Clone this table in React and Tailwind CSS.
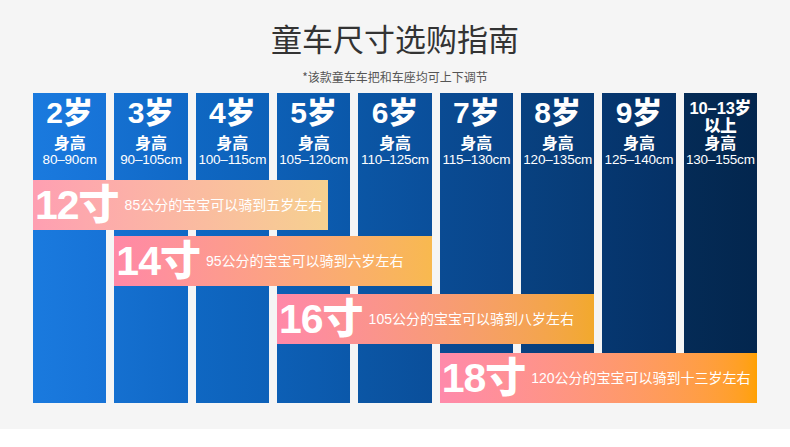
import React from "react";

const columns = [
  { age: "2", range: "80–90cm", cls: "col-start-1 from-[#1a7ade] to-[#1773d7]" },
  { age: "3", range: "90–105cm", cls: "col-start-2 from-[#1570d0] to-[#1068c6]" },
  { age: "4", range: "100–115cm", cls: "col-start-3 from-[#0f67c2] to-[#0d61b9]" },
  { age: "5", range: "105–120cm", cls: "col-start-4 from-[#0d5fb5] to-[#0b58aa]" },
  { age: "6", range: "110–125cm", cls: "col-start-5 from-[#0b56a5] to-[#0a4f9b]" },
  { age: "7", range: "115–130cm", cls: "col-start-6 from-[#0a4b93] to-[#09458a]" },
  { age: "8", range: "120–135cm", cls: "col-start-7 from-[#084180] to-[#073b76]" },
  { age: "9", range: "125–140cm", cls: "col-start-8 from-[#063770] to-[#053166]" },
];

const banners = [
  {
    size: "12",
    text: "85公分的宝宝可以骑到五岁左右",
    cls: "row-start-2 col-start-1 col-end-5 mr-[22px] from-[#fe9fb2] to-[#f6d08f]",
  },
  {
    size: "14",
    text: "95公分的宝宝可以骑到六岁左右",
    cls: "row-start-4 col-start-2 col-end-6 from-[#ff88a6] to-[#f8b94f]",
  },
  {
    size: "16",
    text: "105公分的宝宝可以骑到八岁左右",
    cls: "row-start-6 col-start-4 col-end-8 from-[#ff88a8] to-[#f2a92c]",
  },
  {
    size: "18",
    text: "120公分的宝宝可以骑到十三岁左右",
    cls: "row-start-8 col-start-6 col-end-10 from-[#ff8aab] to-[#ffa100]",
  },
];

function Column({ age, range, cls }) {
  return (
    <div className={"row-start-1 row-end-9 flex flex-col items-center pt-[4px] text-white bg-linear-to-r " + cls}>
      <div className="h-[32px] text-[30px] leading-[32px] font-black">
        {age}岁
      </div>
      <div className="mt-[6px] text-[16px] leading-[18px] font-bold">身高</div>
      <div className="text-[13.5px] leading-[14px] tracking-[-0.2px]">{range}</div>
    </div>
  );
}

function Banner({ size, text, cls }) {
  return (
    <div className={"z-10 flex items-center gap-[6px] pl-[2px] text-white bg-linear-to-r " + cls}>
      <span className="text-[41px] leading-none font-black tracking-[-1px] whitespace-nowrap">
        {size}寸
      </span>
      <span className="text-[14px] leading-none whitespace-nowrap">{text}</span>
    </div>
  );
}

export default function App() {
  return (
    <div className="w-[790px] h-[447px] bg-white font-['Liberation_Sans','Noto_Sans_CJK_SC',sans-serif]">
      <div className="h-[429px] bg-[#f5f5f5] pt-[18px]">
        <h1 className="text-center text-[31px] leading-[40px] text-[#333333] font-['Noto_Sans_CJK_SC',sans-serif] font-normal">
          童车尺寸选购指南
        </h1>
        <p className="mt-[11px] text-center text-[12px] leading-[16px] text-[#555555] font-['Noto_Sans_CJK_SC',sans-serif]">
          *该款童车车把和车座均可上下调节
        </p>
        <div className="mx-[33px] mt-[8px] grid grid-cols-9 gap-x-[8px] grid-rows-[87px_50px_6px_50px_8px_50px_9px_50px]">
          {columns.map((c) => (
            <Column key={c.age} {...c} />
          ))}
          <div className="row-start-1 row-end-9 col-start-9 flex flex-col items-center pt-[6px] text-white bg-linear-to-r from-[#042b56] to-[#03264e]">
            <div className="text-center text-[16.5px] leading-[18px] font-black tracking-[-0.1px]">
              10–13岁
              <br />
              以上
            </div>
            <div className="text-[16px] leading-[18px] font-bold">身高</div>
            <div className="text-[13.5px] leading-[14px] tracking-[-0.2px]">130–155cm</div>
          </div>
          {banners.map((b) => (
            <Banner key={b.size} {...b} />
          ))}
        </div>
      </div>
    </div>
  );
}
